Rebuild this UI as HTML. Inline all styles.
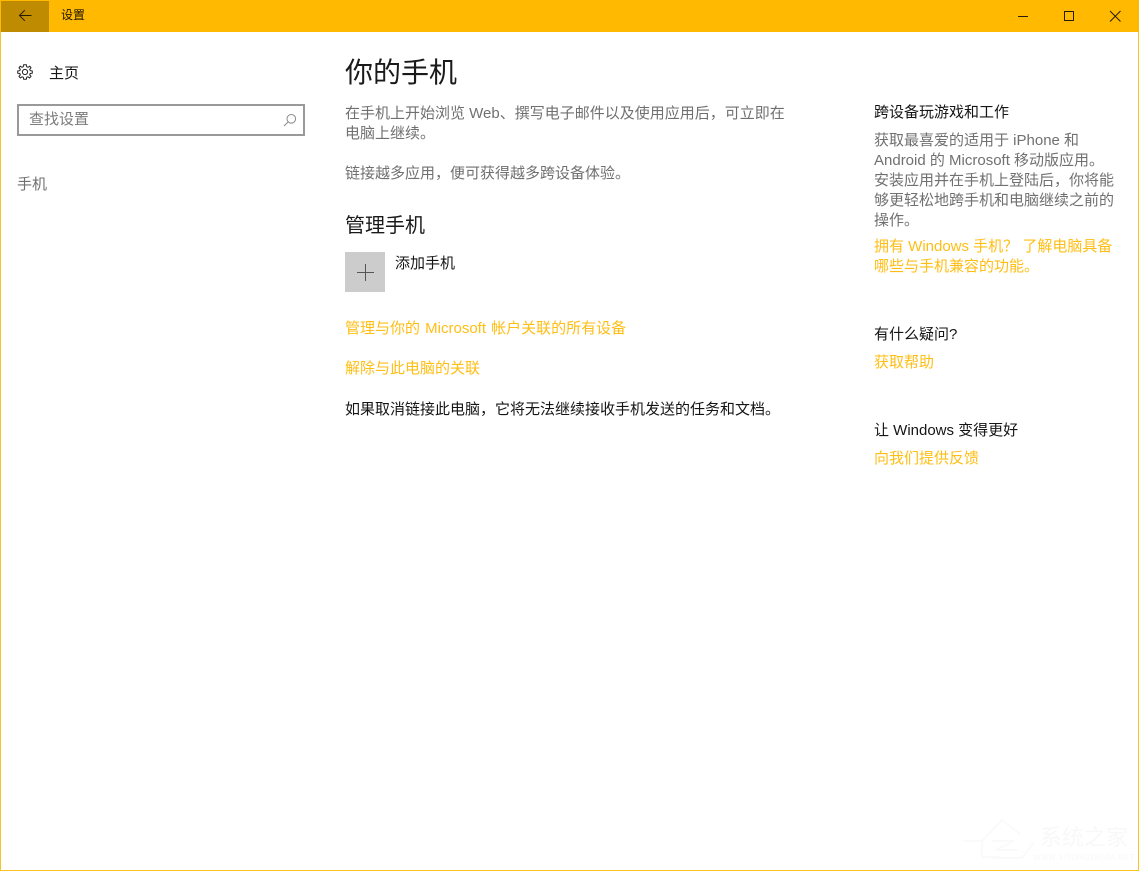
<!DOCTYPE html>
<html lang="zh-CN">
<head>
<meta charset="utf-8">
<title>设置</title>
<style>
html,body{margin:0;padding:0;background:#fff}
body{width:1139px;height:871px;position:relative;overflow:hidden;font-family:"Liberation Sans","Noto Sans CJK SC",sans-serif;font-size:15px;color:#151515}
.t{position:absolute;white-space:nowrap;line-height:20px;height:20px}
.g{color:#707070}
.y{color:#ffbe14}
.f{position:absolute;background:#f9c425}
svg{position:absolute;display:block}
</style>
</head>
<body>
<div style="position:absolute;left:0;top:0;width:1139px;height:32px;background:#ffb900"></div>
<div style="position:absolute;left:1px;top:1px;width:48px;height:31px;background:#bf8b00"></div>
<div class="f" style="left:0;top:32px;width:1px;height:839px"></div>
<div class="f" style="left:1138px;top:32px;width:1px;height:839px"></div>
<div class="f" style="left:0;top:870px;width:1139px;height:1px"></div>

<svg style="left:18px;top:9px" width="16" height="14" viewBox="0 0 16 14" fill="none" stroke="#2a1c00" stroke-width="1"><path d="M1.500 6.500H13.500M6.800 1.200L1.500 6.500L6.800 11.800"/></svg>
<div class="t" style="left:61px;top:5px;font-size:12px;color:#1c1400">设置</div>
<svg style="left:1018px;top:10px" width="110" height="12" viewBox="0 0 110 12" fill="none" stroke="#2a1c00" stroke-width="1"><path d="M0 6.500H10"/><rect x="46.500" y="1.500" width="9" height="9"/><path d="M92 1L102.500 11.500M102.500 1L92 11.500"/></svg>

<svg style="left:17px;top:64px" width="16" height="16" viewBox="0 0 16 16" fill="none" stroke="#222" stroke-width="1"><circle cx="8" cy="8" r="2.600"/><path d="M6.700 .7H9.300L9.700 2.700L11 3.300L12.800 2.200L14 3.800L12.700 5.200L13.200 6.600L15.300 7V9.200L13.200 9.500L12.700 10.900L14 12.300L12.600 13.900L11 12.800L9.700 13.300L9.300 15.300H6.700L6.300 13.300L5 12.800L3.300 13.900L2 12.300L3.300 10.900L2.800 9.500L.7 9.200V7L2.800 6.600L3.300 5.200L2 3.800L3.200 2.200L5 3.300L6.300 2.700Z"/></svg>
<div class="t" style="left:49px;top:64px">主页</div>

<div style="position:absolute;left:17px;top:104px;width:284px;height:28px;border:2px solid #999;background:#fff"></div>
<div class="t" style="left:29px;top:110px;color:#7c7c7c">查找设置</div>
<svg style="left:283px;top:113px" width="15" height="15" viewBox="0 0 15 15" fill="none" stroke="#8a8a8a" stroke-width="1"><circle cx="8.300" cy="5.800" r="4.300"/><path d="M5.200 8.900L1 13"/></svg>
<div class="t g" style="left:17px;top:175px">手机</div>

<div class="t" style="left:345px;top:53px;font-size:28px;line-height:40px;height:40px;color:#1a1a1a">你的手机</div>
<div class="t g" style="left:345px;top:104px">在手机上开始浏览 Web、撰写电子邮件以及使用应用后，可立即在</div>
<div class="t g" style="left:345px;top:124px">电脑上继续。</div>
<div class="t g" style="left:345px;top:164px">链接越多应用，便可获得越多跨设备体验。</div>
<div class="t" style="left:345px;top:211px;font-size:20px;line-height:30px;height:30px;color:#1a1a1a">管理手机</div>

<div style="position:absolute;left:345px;top:252px;width:40px;height:40px;background:#ccc"></div>
<svg style="left:357px;top:264px" width="17" height="17" viewBox="0 0 17 17" fill="none" stroke="#555" stroke-width="1"><path d="M8.500 0V17M0 8.500H17"/></svg>
<div class="t" style="left:395px;top:254px">添加手机</div>

<div class="t y" style="left:345px;top:319px;word-spacing:1px">管理与你的 Microsoft 帐户关联的所有设备</div>
<div class="t y" style="left:345px;top:359px">解除与此电脑的关联</div>
<div class="t" style="left:345px;top:400px">如果取消链接此电脑，它将无法继续接收手机发送的任务和文档。</div>

<div class="t" style="left:874px;top:103px">跨设备玩游戏和工作</div>
<div class="t g" style="left:874px;top:131px">获取最喜爱的适用于 iPhone 和</div>
<div class="t g" style="left:874px;top:151px">Android 的 Microsoft 移动版应用。</div>
<div class="t g" style="left:874px;top:171px">安装应用并在手机上登陆后，你将能</div>
<div class="t g" style="left:874px;top:191px">够更轻松地跨手机和电脑继续之前的</div>
<div class="t g" style="left:874px;top:211px">操作。</div>
<div class="t y" style="left:874px;top:237px">拥有 Windows 手机？ 了解电脑具备</div>
<div class="t y" style="left:874px;top:257px">哪些与手机兼容的功能。</div>

<div class="t" style="left:874px;top:325px">有什么疑问?</div>
<div class="t y" style="left:874px;top:353px">获取帮助</div>
<div class="t" style="left:874px;top:421px">让 Windows 变得更好</div>
<div class="t y" style="left:874px;top:449px">向我们提供反馈</div>

<svg style="left:962px;top:814px" width="78" height="50" viewBox="0 0 78 50" fill="none" stroke="#fafafa" stroke-width="2"><path d="M2 27H20L40 6L58 20M20 27V43H38M30 27H52L34 36H56M30 44H60L72 28"/></svg>
<div class="t" style="left:1040px;top:823px;font-size:22px;line-height:30px;height:30px;color:#f8f8f8">系统之家</div>
<div class="t" style="left:1033px;top:852px;font-size:8px;line-height:12px;height:12px;letter-spacing:.2px;color:#f8f8f8">WWW.XITONGZHIJIA.NET</div>
</body>
</html>
